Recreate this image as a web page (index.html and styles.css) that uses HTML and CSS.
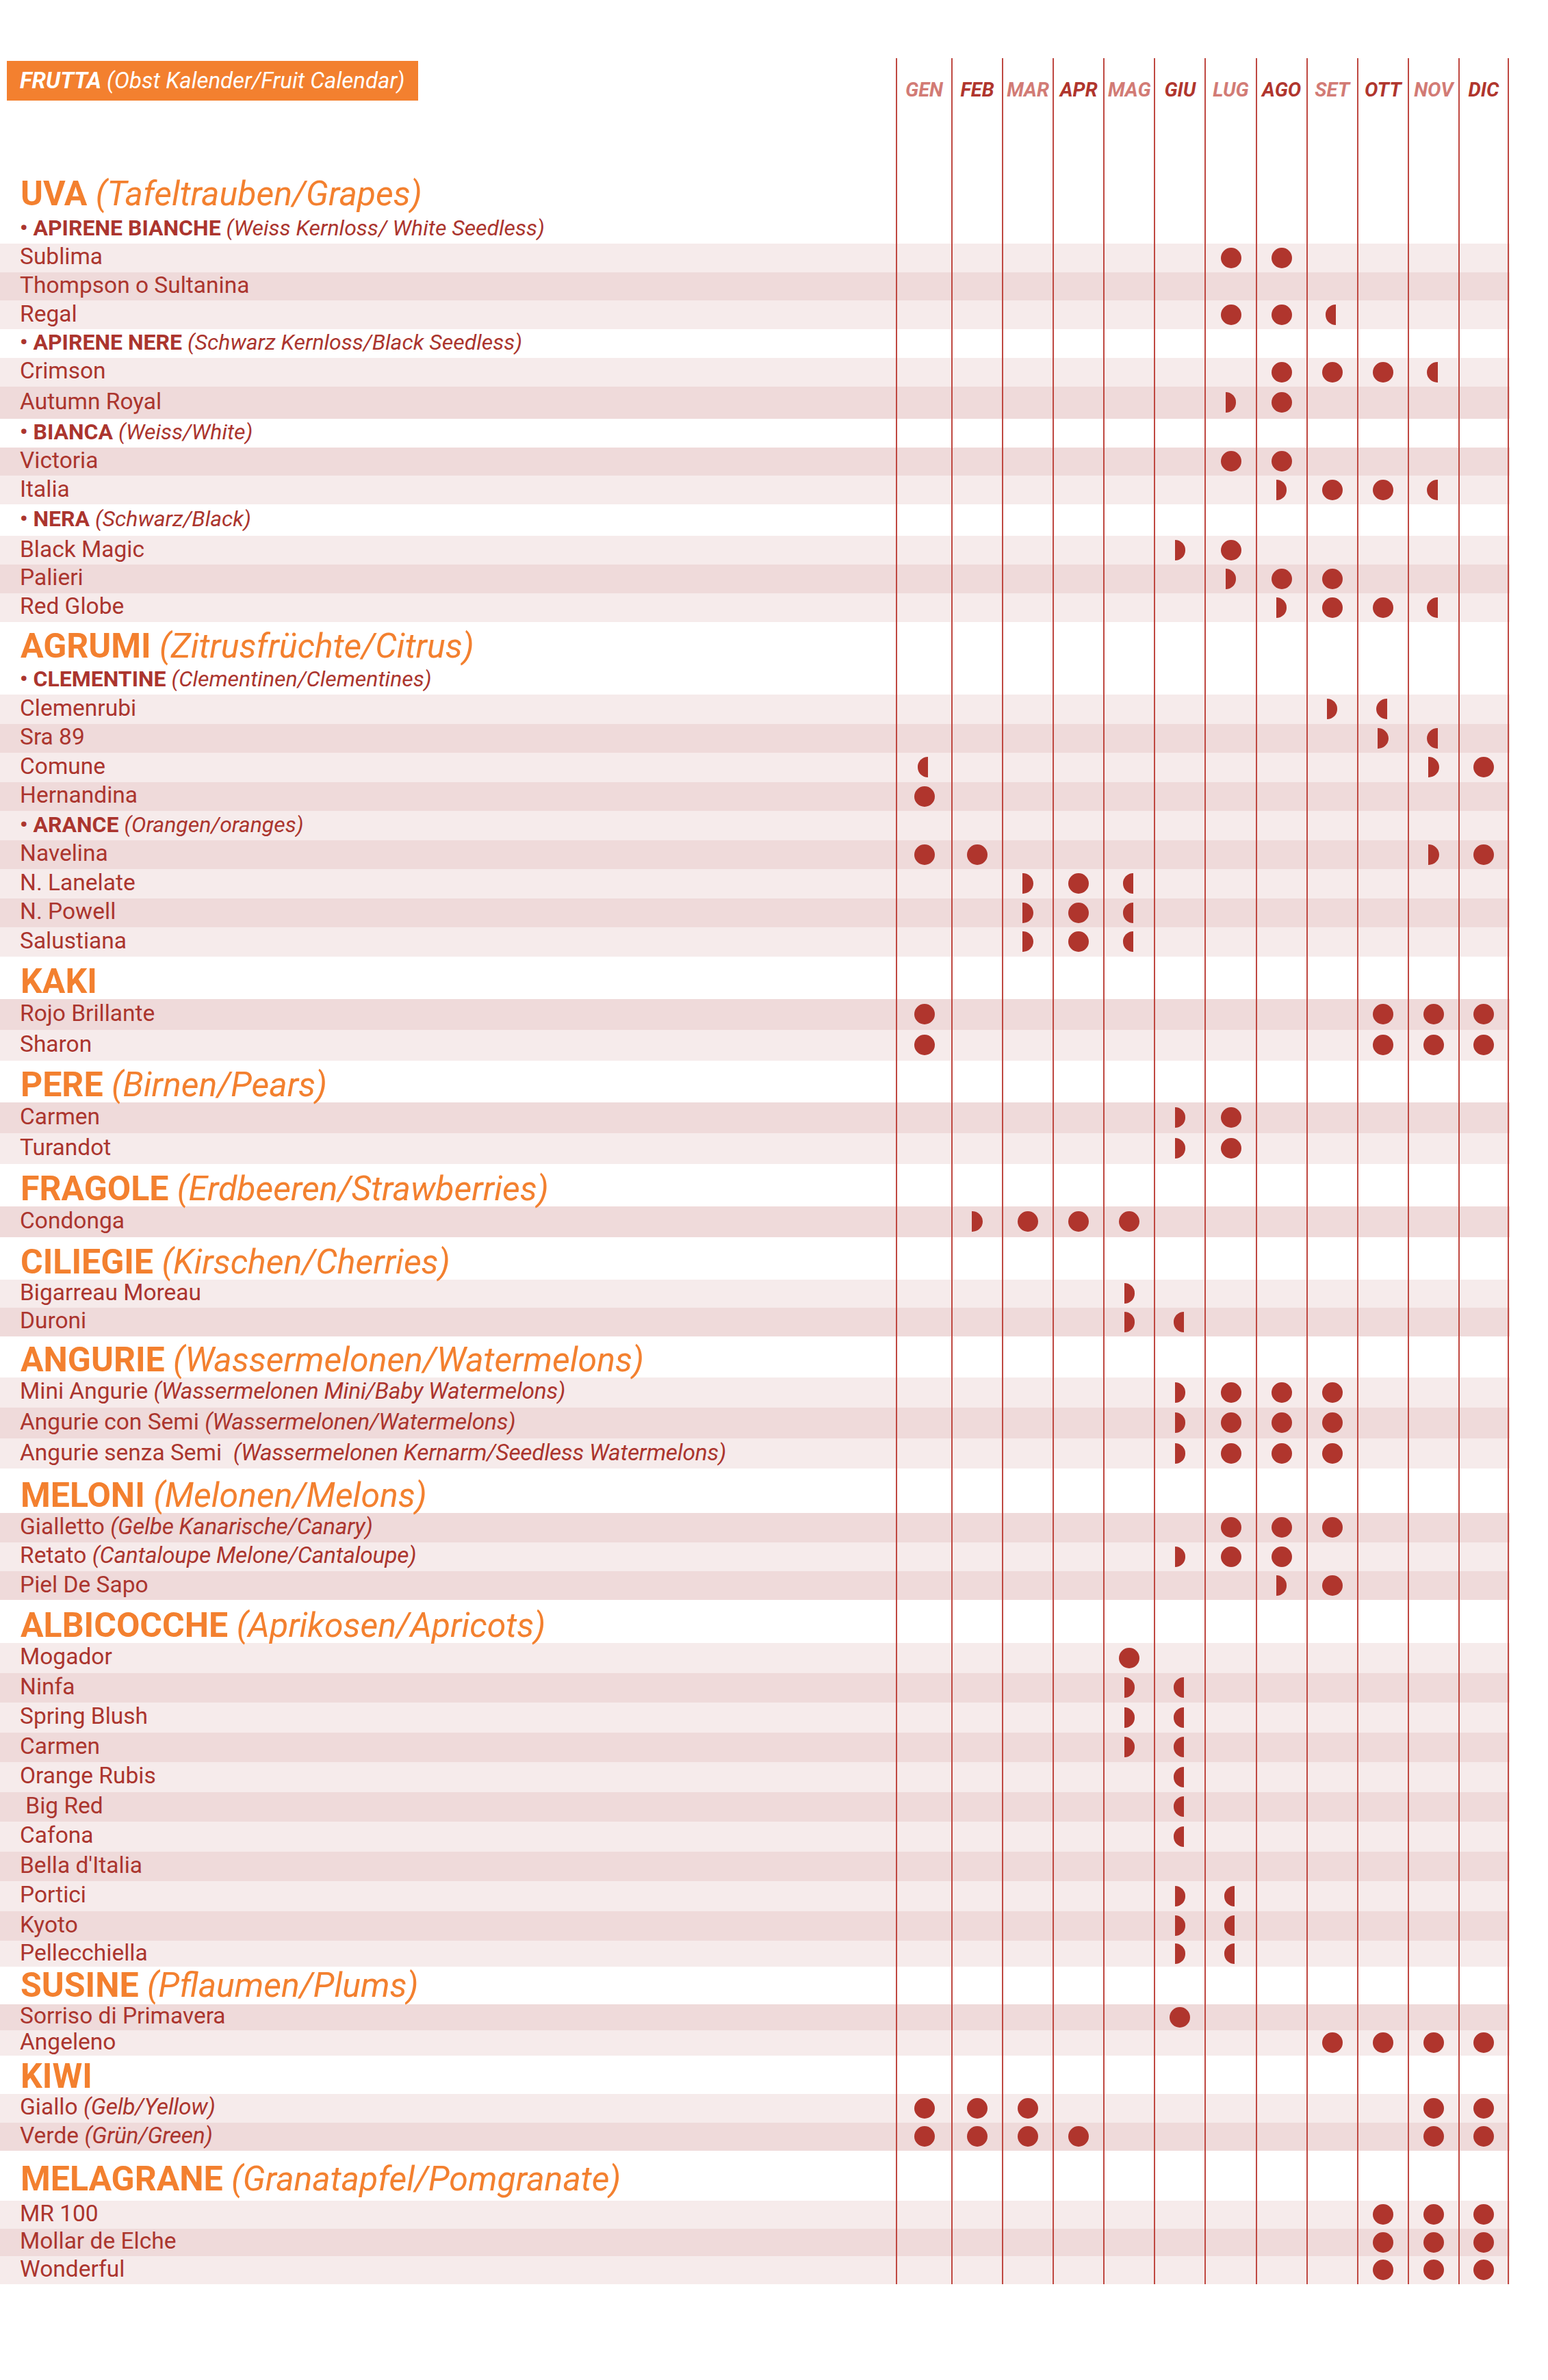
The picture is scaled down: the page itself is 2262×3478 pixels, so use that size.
FILE: index.html
```html
<!DOCTYPE html>
<html lang="it">
<head>
<meta charset="utf-8">
<title>Frutta – Calendario</title>
<link rel="stylesheet" href="styles.css">
</head>
<body>
<main class="cal">
<div class="row head"><div class="n"><div class="box"><b>FRUTTA</b>&nbsp;<em>(Obst Kalender/Fruit Calendar)</em></div></div><span>GEN</span><span>FEB</span><span>MAR</span><span>APR</span><span>MAG</span><span>GIU</span><span>LUG</span><span>AGO</span><span>SET</span><span>OTT</span><span>NOV</span><span>DIC</span></div>

<section class="grp uva">
<div class="row t"><div class="n"><b>UVA</b>&nbsp;<em>(Tafeltrauben/Grapes)</em></div><span></span><span></span><span></span><span></span><span></span><span></span><span></span><span></span><span></span><span></span><span></span><span></span></div>
<div class="row sub"><div class="n"><b>• APIRENE BIANCHE</b>&nbsp;<em>(Weiss Kernloss/ White Seedless)</em></div><span></span><span></span><span></span><span></span><span></span><span></span><span></span><span></span><span></span><span></span><span></span><span></span></div>
<div class="row l"><div class="n">Sublima</div><span></span><span></span><span></span><span></span><span></span><span></span><span class="f"></span><span class="f"></span><span></span><span></span><span></span><span></span></div>
<div class="row d"><div class="n">Thompson o Sultanina</div><span></span><span></span><span></span><span></span><span></span><span></span><span></span><span></span><span></span><span></span><span></span><span></span></div>
<div class="row l"><div class="n">Regal</div><span></span><span></span><span></span><span></span><span></span><span></span><span class="f"></span><span class="f"></span><span class="e"></span><span></span><span></span><span></span></div>
<div class="row sub"><div class="n"><b>• APIRENE NERE</b>&nbsp;<em>(Schwarz Kernloss/Black Seedless)</em></div><span></span><span></span><span></span><span></span><span></span><span></span><span></span><span></span><span></span><span></span><span></span><span></span></div>
<div class="row l"><div class="n">Crimson</div><span></span><span></span><span></span><span></span><span></span><span></span><span></span><span class="f"></span><span class="f"></span><span class="f"></span><span class="e"></span><span></span></div>
<div class="row d h47"><div class="n">Autumn Royal</div><span></span><span></span><span></span><span></span><span></span><span></span><span class="s"></span><span class="f"></span><span></span><span></span><span></span><span></span></div>
<div class="row sub"><div class="n"><b>• BIANCA</b>&nbsp;<em>(Weiss/White)</em></div><span></span><span></span><span></span><span></span><span></span><span></span><span></span><span></span><span></span><span></span><span></span><span></span></div>
<div class="row d"><div class="n">Victoria</div><span></span><span></span><span></span><span></span><span></span><span></span><span class="f"></span><span class="f"></span><span></span><span></span><span></span><span></span></div>
<div class="row l"><div class="n">Italia</div><span></span><span></span><span></span><span></span><span></span><span></span><span></span><span class="s"></span><span class="f"></span><span class="f"></span><span class="e"></span><span></span></div>
<div class="row sub h46"><div class="n"><b>• NERA</b>&nbsp;<em>(Schwarz/Black)</em></div><span></span><span></span><span></span><span></span><span></span><span></span><span></span><span></span><span></span><span></span><span></span><span></span></div>
<div class="row l"><div class="n">Black Magic</div><span></span><span></span><span></span><span></span><span></span><span class="s"></span><span class="f"></span><span></span><span></span><span></span><span></span><span></span></div>
<div class="row d"><div class="n">Palieri</div><span></span><span></span><span></span><span></span><span></span><span></span><span class="s"></span><span class="f"></span><span class="f"></span><span></span><span></span><span></span></div>
<div class="row l"><div class="n">Red Globe</div><span></span><span></span><span></span><span></span><span></span><span></span><span></span><span class="s"></span><span class="f"></span><span class="f"></span><span class="e"></span><span></span></div>
</section>

<section class="grp agr">
<div class="row t"><div class="n"><b>AGRUMI</b>&nbsp;<em>(Zitrusfrüchte/Citrus)</em></div><span></span><span></span><span></span><span></span><span></span><span></span><span></span><span></span><span></span><span></span><span></span><span></span></div>
<div class="row sub"><div class="n"><b>• CLEMENTINE</b>&nbsp;<em>(Clementinen/Clementines)</em></div><span></span><span></span><span></span><span></span><span></span><span></span><span></span><span></span><span></span><span></span><span></span><span></span></div>
<div class="row l"><div class="n">Clemenrubi</div><span></span><span></span><span></span><span></span><span></span><span></span><span></span><span></span><span class="s"></span><span class="e"></span><span></span><span></span></div>
<div class="row d"><div class="n">Sra 89</div><span></span><span></span><span></span><span></span><span></span><span></span><span></span><span></span><span></span><span class="s"></span><span class="e"></span><span></span></div>
<div class="row l"><div class="n">Comune</div><span class="e"></span><span></span><span></span><span></span><span></span><span></span><span></span><span></span><span></span><span></span><span class="s"></span><span class="f"></span></div>
<div class="row d"><div class="n">Hernandina</div><span class="f"></span><span></span><span></span><span></span><span></span><span></span><span></span><span></span><span></span><span></span><span></span><span></span></div>
<div class="row sub l"><div class="n"><b>• ARANCE</b>&nbsp;<em>(Orangen/oranges)</em></div><span></span><span></span><span></span><span></span><span></span><span></span><span></span><span></span><span></span><span></span><span></span><span></span></div>
<div class="row d"><div class="n">Navelina</div><span class="f"></span><span class="f"></span><span></span><span></span><span></span><span></span><span></span><span></span><span></span><span></span><span class="s"></span><span class="f"></span></div>
<div class="row l"><div class="n">N. Lanelate</div><span></span><span></span><span class="s"></span><span class="f"></span><span class="e"></span><span></span><span></span><span></span><span></span><span></span><span></span><span></span></div>
<div class="row d"><div class="n">N. Powell</div><span></span><span></span><span class="s"></span><span class="f"></span><span class="e"></span><span></span><span></span><span></span><span></span><span></span><span></span><span></span></div>
<div class="row l"><div class="n">Salustiana</div><span></span><span></span><span class="s"></span><span class="f"></span><span class="e"></span><span></span><span></span><span></span><span></span><span></span><span></span><span></span></div>
</section>

<section class="grp kaki">
<div class="row t"><div class="n"><b>KAKI</b></div><span></span><span></span><span></span><span></span><span></span><span></span><span></span><span></span><span></span><span></span><span></span><span></span></div>
<div class="row d"><div class="n">Rojo Brillante</div><span class="f"></span><span></span><span></span><span></span><span></span><span></span><span></span><span></span><span></span><span class="f"></span><span class="f"></span><span class="f"></span></div>
<div class="row l"><div class="n">Sharon</div><span class="f"></span><span></span><span></span><span></span><span></span><span></span><span></span><span></span><span></span><span class="f"></span><span class="f"></span><span class="f"></span></div>
</section>

<section class="grp pere">
<div class="row t"><div class="n"><b>PERE</b>&nbsp;<em>(Birnen/Pears)</em></div><span></span><span></span><span></span><span></span><span></span><span></span><span></span><span></span><span></span><span></span><span></span><span></span></div>
<div class="row d"><div class="n">Carmen</div><span></span><span></span><span></span><span></span><span></span><span class="s"></span><span class="f"></span><span></span><span></span><span></span><span></span><span></span></div>
<div class="row l"><div class="n">Turandot</div><span></span><span></span><span></span><span></span><span></span><span class="s"></span><span class="f"></span><span></span><span></span><span></span><span></span><span></span></div>
</section>

<section class="grp frag">
<div class="row t"><div class="n"><b>FRAGOLE</b>&nbsp;<em>(Erdbeeren/Strawberries)</em></div><span></span><span></span><span></span><span></span><span></span><span></span><span></span><span></span><span></span><span></span><span></span><span></span></div>
<div class="row d"><div class="n">Condonga</div><span></span><span class="s"></span><span class="f"></span><span class="f"></span><span class="f"></span><span></span><span></span><span></span><span></span><span></span><span></span><span></span></div>
</section>

<section class="grp cil">
<div class="row t"><div class="n"><b>CILIEGIE</b>&nbsp;<em>(Kirschen/Cherries)</em></div><span></span><span></span><span></span><span></span><span></span><span></span><span></span><span></span><span></span><span></span><span></span><span></span></div>
<div class="row l"><div class="n">Bigarreau Moreau</div><span></span><span></span><span></span><span></span><span class="s"></span><span></span><span></span><span></span><span></span><span></span><span></span><span></span></div>
<div class="row d"><div class="n">Duroni</div><span></span><span></span><span></span><span></span><span class="s"></span><span class="e"></span><span></span><span></span><span></span><span></span><span></span><span></span></div>
</section>

<section class="grp ang">
<div class="row t"><div class="n"><b>ANGURIE</b>&nbsp;<em>(Wassermelonen/Watermelons)</em></div><span></span><span></span><span></span><span></span><span></span><span></span><span></span><span></span><span></span><span></span><span></span><span></span></div>
<div class="row l"><div class="n">Mini Angurie&nbsp;<em>(Wassermelonen Mini/Baby Watermelons)</em></div><span></span><span></span><span></span><span></span><span></span><span class="s"></span><span class="f"></span><span class="f"></span><span class="f"></span><span></span><span></span><span></span></div>
<div class="row d"><div class="n">Angurie con Semi&nbsp;<em>(Wassermelonen/Watermelons)</em></div><span></span><span></span><span></span><span></span><span></span><span class="s"></span><span class="f"></span><span class="f"></span><span class="f"></span><span></span><span></span><span></span></div>
<div class="row l"><div class="n">Angurie senza Semi&nbsp;&nbsp;<em>(Wassermelonen Kernarm/Seedless Watermelons)</em></div><span></span><span></span><span></span><span></span><span></span><span class="s"></span><span class="f"></span><span class="f"></span><span class="f"></span><span></span><span></span><span></span></div>
</section>

<section class="grp mel">
<div class="row t"><div class="n"><b>MELONI</b>&nbsp;<em>(Melonen/Melons)</em></div><span></span><span></span><span></span><span></span><span></span><span></span><span></span><span></span><span></span><span></span><span></span><span></span></div>
<div class="row d"><div class="n">Gialletto&nbsp;<em>(Gelbe Kanarische/Canary)</em></div><span></span><span></span><span></span><span></span><span></span><span></span><span class="f"></span><span class="f"></span><span class="f"></span><span></span><span></span><span></span></div>
<div class="row l"><div class="n">Retato&nbsp;<em>(Cantaloupe Melone/Cantaloupe)</em></div><span></span><span></span><span></span><span></span><span></span><span class="s"></span><span class="f"></span><span class="f"></span><span></span><span></span><span></span><span></span></div>
<div class="row d"><div class="n">Piel De Sapo</div><span></span><span></span><span></span><span></span><span></span><span></span><span></span><span class="s"></span><span class="f"></span><span></span><span></span><span></span></div>
</section>

<section class="grp alb">
<div class="row t"><div class="n"><b>ALBICOCCHE</b>&nbsp;<em>(Aprikosen/Apricots)</em></div><span></span><span></span><span></span><span></span><span></span><span></span><span></span><span></span><span></span><span></span><span></span><span></span></div>
<div class="row l"><div class="n">Mogador</div><span></span><span></span><span></span><span></span><span class="f"></span><span></span><span></span><span></span><span></span><span></span><span></span><span></span></div>
<div class="row d"><div class="n">Ninfa</div><span></span><span></span><span></span><span></span><span class="s"></span><span class="e"></span><span></span><span></span><span></span><span></span><span></span><span></span></div>
<div class="row l"><div class="n">Spring Blush</div><span></span><span></span><span></span><span></span><span class="s"></span><span class="e"></span><span></span><span></span><span></span><span></span><span></span><span></span></div>
<div class="row d"><div class="n">Carmen</div><span></span><span></span><span></span><span></span><span class="s"></span><span class="e"></span><span></span><span></span><span></span><span></span><span></span><span></span></div>
<div class="row l"><div class="n">Orange Rubis</div><span></span><span></span><span></span><span></span><span></span><span class="e"></span><span></span><span></span><span></span><span></span><span></span><span></span></div>
<div class="row d"><div class="n">&nbsp;Big Red</div><span></span><span></span><span></span><span></span><span></span><span class="e"></span><span></span><span></span><span></span><span></span><span></span><span></span></div>
<div class="row l"><div class="n">Cafona</div><span></span><span></span><span></span><span></span><span></span><span class="e"></span><span></span><span></span><span></span><span></span><span></span><span></span></div>
<div class="row d"><div class="n">Bella d'Italia</div><span></span><span></span><span></span><span></span><span></span><span></span><span></span><span></span><span></span><span></span><span></span><span></span></div>
<div class="row l"><div class="n">Portici</div><span></span><span></span><span></span><span></span><span></span><span class="s"></span><span class="e"></span><span></span><span></span><span></span><span></span><span></span></div>
<div class="row d"><div class="n">Kyoto</div><span></span><span></span><span></span><span></span><span></span><span class="s"></span><span class="e"></span><span></span><span></span><span></span><span></span><span></span></div>
<div class="row l h38"><div class="n">Pellecchiella</div><span></span><span></span><span></span><span></span><span></span><span class="s"></span><span class="e"></span><span></span><span></span><span></span><span></span><span></span></div>
</section>

<section class="grp sus">
<div class="row t"><div class="n"><b>SUSINE</b>&nbsp;<em>(Pflaumen/Plums)</em></div><span></span><span></span><span></span><span></span><span></span><span></span><span></span><span></span><span></span><span></span><span></span><span></span></div>
<div class="row d"><div class="n">Sorriso di Primavera</div><span></span><span></span><span></span><span></span><span></span><span class="f"></span><span></span><span></span><span></span><span></span><span></span><span></span></div>
<div class="row l"><div class="n">Angeleno</div><span></span><span></span><span></span><span></span><span></span><span></span><span></span><span></span><span class="f"></span><span class="f"></span><span class="f"></span><span class="f"></span></div>
</section>

<section class="grp kiwi">
<div class="row t"><div class="n"><b>KIWI</b></div><span></span><span></span><span></span><span></span><span></span><span></span><span></span><span></span><span></span><span></span><span></span><span></span></div>
<div class="row l"><div class="n">Giallo&nbsp;<em>(Gelb/Yellow)</em></div><span class="f"></span><span class="f"></span><span class="f"></span><span></span><span></span><span></span><span></span><span></span><span></span><span></span><span class="f"></span><span class="f"></span></div>
<div class="row d"><div class="n">Verde&nbsp;<em>(Grün/Green)</em></div><span class="f"></span><span class="f"></span><span class="f"></span><span class="f"></span><span></span><span></span><span></span><span></span><span></span><span></span><span class="f"></span><span class="f"></span></div>
</section>

<section class="grp melag">
<div class="row t"><div class="n"><b>MELAGRANE</b>&nbsp;<em>(Granatapfel/Pomgranate)</em></div><span></span><span></span><span></span><span></span><span></span><span></span><span></span><span></span><span></span><span></span><span></span><span></span></div>
<div class="row l"><div class="n">MR 100</div><span></span><span></span><span></span><span></span><span></span><span></span><span></span><span></span><span></span><span class="f"></span><span class="f"></span><span class="f"></span></div>
<div class="row d"><div class="n">Mollar de Elche</div><span></span><span></span><span></span><span></span><span></span><span></span><span></span><span></span><span></span><span class="f"></span><span class="f"></span><span class="f"></span></div>
<div class="row l"><div class="n">Wonderful</div><span></span><span></span><span></span><span></span><span></span><span></span><span></span><span></span><span></span><span class="f"></span><span class="f"></span><span class="f"></span></div>
</section>
</main>
</body>
</html>
```

FILE: styles.css
```css
* { box-sizing: border-box; margin: 0; padding: 0; }
html, body { background: #fff; }
body { font-family: Roboto, "Liberation Sans", Arial, sans-serif; color: #ab352e; }

.cal { padding-top: 85px; width: 2206px; }

.uva   { --t: 149px; --h: 41.8px; --tp: 6.5px; }
.agr   { --t: 64px;  --h: 42.5px; --tp: 4px; }
.kaki  { --t: 62px;  --h: 45px; }
.pere  { --t: 61px;  --h: 45px; }
.frag  { --t: 62px;  --h: 45px; }
.cil   { --t: 62px;  --h: 41.5px; }
.ang   { --t: 60px;  --h: 44.6px; }
.mel   { --t: 65px;  --h: 42.3px; }
.alb   { --t: 63px;  --h: 43.5px; }
.sus   { --t: 55px;  --h: 37.5px; --tp: 3px; }
.kiwi  { --t: 56px;  --h: 41.5px; }
.melag { --t: 73px;  --h: 40.5px; --tp: 7px; }

.row {
  display: grid;
  grid-template-columns: 1309px 81px repeat(11, 74.1px);
  height: var(--h, 42px);
}
.row > span {
  display: flex;
  align-items: center;
  justify-content: center;
  border-left: 2px solid #bf4841;
}
.row > span:last-child { border-right: 2px solid #bf4841; }

.t { height: var(--t, 62px); }
.h38 { height: 38px; }
.h46 { height: 46px; }
.h47 { height: 47px; }

.l { background: #f6ebeb; }
.d { background: #efdada; }

.n {
  display: flex;
  align-items: center;
  padding: 0 0 3.5px 29px;
  font-size: 33.5px;
  line-height: 1;
  white-space: nowrap;
}
.n em { font-style: italic; letter-spacing: -0.25px; }

.sub .n { font-size: 32px; }
.sub b { font-weight: 700; }
.sub em { letter-spacing: 0; }

.t .n {
  align-items: flex-end;
  padding-bottom: var(--tp, 1px);
  padding-left: 30px;
  font-size: 50px;
  color: #f3802f;
}
.t b { font-weight: 700; }
.t em { font-weight: 400; letter-spacing: 0; }

.f::before, .s::before, .e::before {
  content: "";
  display: block;
  height: 30px;
  background: #b0352d;
}
.f::before { width: 30px; border-radius: 50%; }
.s::before { width: 15.5px; border-radius: 0 15.5px 15.5px 0 / 0 15px 15px 0; }
.e::before { width: 15.5px; border-radius: 15.5px 0 0 15.5px / 15px 0 0 15px; margin-right: 4px; }

.head { height: 80px; }
.head .n { align-items: flex-start; padding: 4px 0 0 10px; }
.box {
  display: flex;
  align-items: center;
  width: 601px;
  height: 58px;
  padding: 0 0 2px 19px;
  background: #f3802f;
  color: #fff;
  font-size: 33px;
}
.box b { font-weight: 700; font-style: italic; }
.box em { letter-spacing: 0; }
.head > span {
  align-items: flex-start;
  padding-top: 32px;
  font-size: 29px;
  font-weight: 700;
  font-style: italic;
  line-height: 1;
}
.head > span:nth-child(even) { color: #d27b75; }
.head > span:nth-child(odd) { color: #b0352d; }
```
